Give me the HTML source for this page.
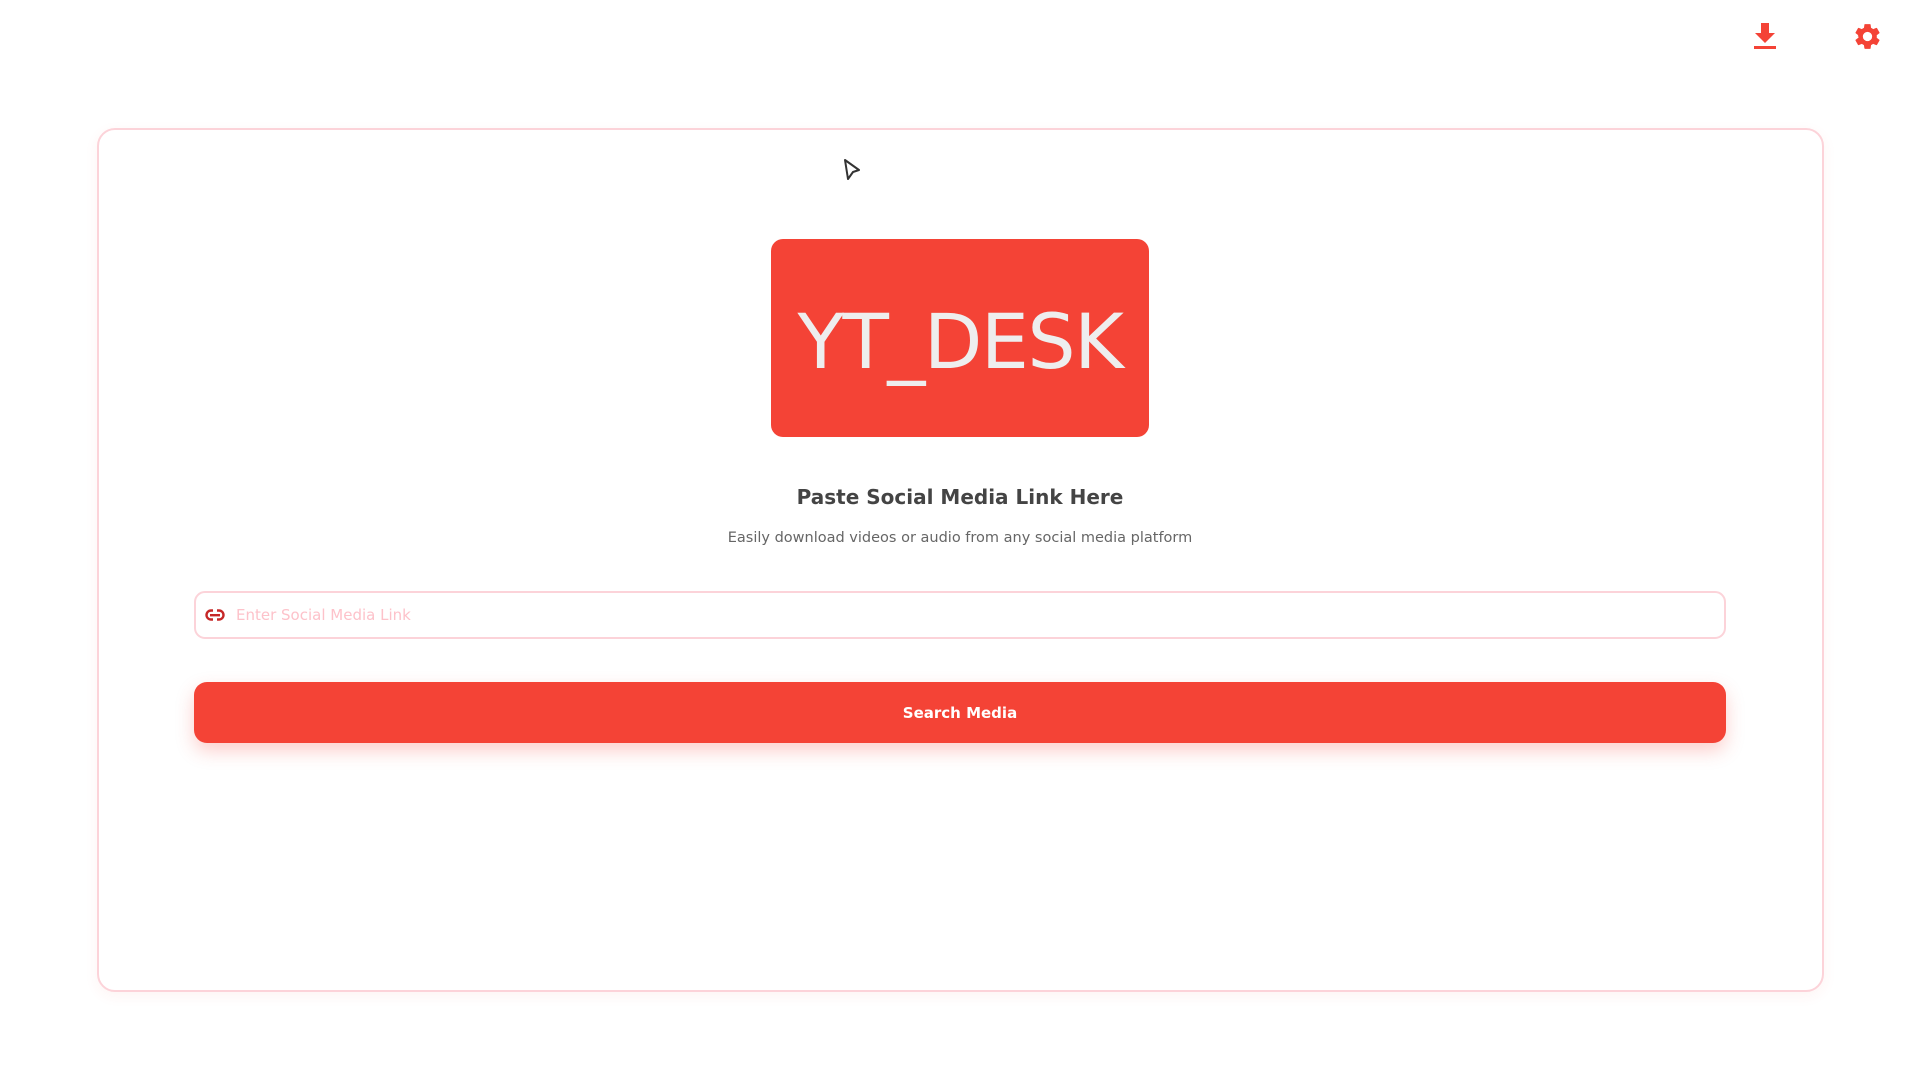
<!DOCTYPE html>
<html><head><style>
html,body{margin:0;padding:0;width:1920px;height:1080px;background:#fff;overflow:hidden;font-family:"DejaVu Sans","Liberation Sans",sans-serif;}
.card{position:absolute;left:97px;top:128px;width:1727px;height:864px;border:2px solid #fcd3d9;border-radius:18px;box-shadow:0 4px 14px rgba(244,67,54,0.06);box-sizing:border-box;}
.logo{position:absolute;left:771px;top:239px;width:378px;height:198px;background:#f44336;border-radius:12px;color:#eee;font-size:76px;line-height:206px;text-align:center;letter-spacing:-1.5px;}
.title{position:absolute;left:0;width:1920px;top:485px;text-align:center;font-size:20px;font-weight:bold;color:#444;}
.sub{position:absolute;left:0;width:1920px;top:530px;text-align:center;font-size:14.5px;color:#666;}
.input{position:absolute;left:194px;top:591px;width:1532px;height:48px;border:2px solid #fcd3d9;border-radius:11px;box-sizing:border-box;}
.ph{position:absolute;left:40px;top:13px;font-size:15px;color:#fdc2ca;}
.btn{position:absolute;left:194px;top:682px;width:1532px;height:61px;background:#f44336;border-radius:13px;box-shadow:0 8px 18px rgba(244,67,54,0.25);color:#fff;font-weight:bold;font-size:15px;text-align:center;line-height:63px;}
</style></head><body>
<svg style="position:absolute;left:1754px;top:23px" width="22" height="27" viewBox="0 0 22 27"><path d="M7 0h8v10h6l-10 10L1 10h6z" fill="#f44336"/><rect x="0" y="23" width="22" height="3" fill="#f44336"/></svg>
<svg style="position:absolute;left:1852px;top:21px" width="31" height="31" viewBox="0 0 24 24"><path fill="#f44336" d="M19.14 12.94c.04-.3.06-.61.06-.94s-.02-.64-.07-.94l2.03-1.58a.49.49 0 0 0 .12-.61l-1.92-3.32a.49.49 0 0 0-.59-.22l-2.39.96c-.5-.38-1.03-.7-1.62-.94l-.36-2.54a.48.48 0 0 0-.48-.41h-3.840c-.24 0-.43.17-.47.41l-.36 2.54c-.59.24-1.13.57-1.62.94l-2.39-.96a.48.48 0 0 0-.59.22L2.74 8.87a.47.47 0 0 0 .12.61l2.03 1.58c-.05.3-.9.63-.09.94s.2.64.07.94l-2.03 1.58a.49.49 0 0 0-.12.61l1.92 3.32c.12.22.37.29.59.22l2.390-.96c.5.38 1.03.7 1.62.94l.36 2.54c.5.24.24.41.48.41h3.84c.24 0 .44-.17.47-.41l.36-2.54c.59-.24 1.13-.56 1.62-.94l2.39.96c.22.08.47 0 .59-.22l1.92-3.32c.12-.22.07-.47-.12-.61l-2.01-1.58zM12 15.6A3.6 3.6 0 1 1 12 8.4a3.6 3.6 0 0 1 0 7.2z"/></svg>
<div class="card"></div>
<svg style="position:absolute;left:842px;top:158px" width="20" height="24" viewBox="0 0 20 24"><path d="M3 2 L17 12 L11 14 L6 21 Z" fill="#fff" stroke="#333" stroke-width="2" stroke-linejoin="round"/></svg>
<div class="logo">YT_DESK</div>
<div class="title">Paste Social Media Link Here</div>
<div class="sub">Easily download videos or audio from any social media platform</div>
<div class="input">
<svg style="position:absolute;left:9px;top:14px" width="20" height="16" viewBox="0 0 20 16"><rect x="1.5" y="3.5" width="17" height="9" rx="4.5" fill="none" stroke="#c62828" stroke-width="2.4"/><rect x="5" y="7" width="10" height="2.4" fill="#c62828"/><rect x="8" y="2" width="4" height="3" fill="#fff"/><rect x="8" y="11" width="4" height="3" fill="#fff"/></svg>
<div class="ph">Enter Social Media Link</div></div>
<div class="btn">Search Media</div>
</body></html>
